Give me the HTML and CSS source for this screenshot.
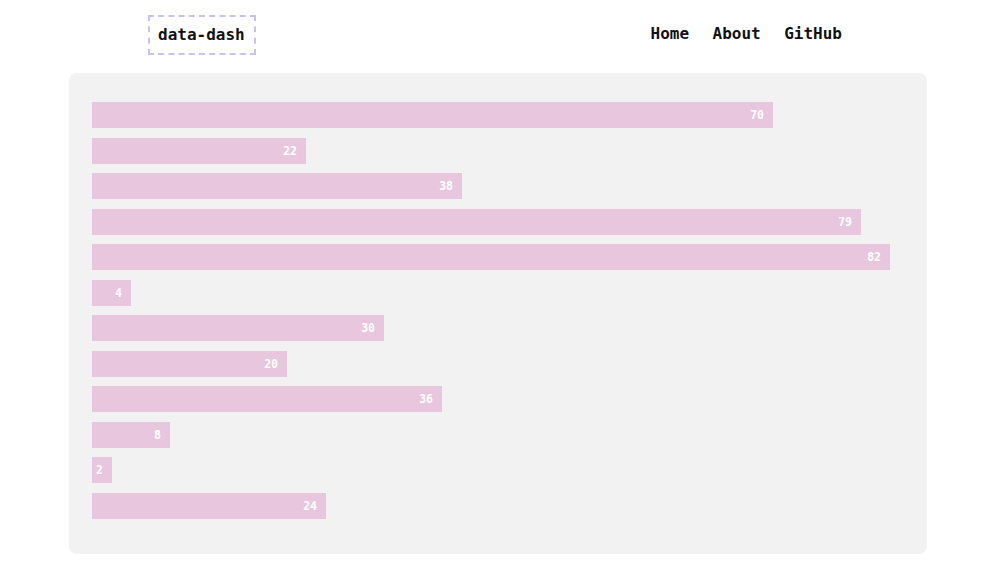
FILE: index.html
```html
<!DOCTYPE html>
<html>
<head>
<meta charset="utf-8">
<link rel="stylesheet" href="styles.css">
</head>
<body>
<header class="top">
  <div class="logo">data-dash</div>
  <nav class="nav">
    <a href="#">Home</a>
    <a href="#">About</a>
    <a href="#">GitHub</a>
  </nav>
</header>
<main class="card">
  <div class="bar" style="width:681px">70</div>
  <div class="bar" style="width:214px">22</div>
  <div class="bar" style="width:370px">38</div>
  <div class="bar" style="width:769px">79</div>
  <div class="bar" style="width:798px">82</div>
  <div class="bar" style="width:39px">4</div>
  <div class="bar" style="width:292px">30</div>
  <div class="bar" style="width:195px">20</div>
  <div class="bar" style="width:350px">36</div>
  <div class="bar" style="width:78px">8</div>
  <div class="bar" style="width:20px">2</div>
  <div class="bar" style="width:234px">24</div>
</main>
</body>
</html>
```

FILE: styles.css
```css
html, body {
  margin: 0;
  padding: 0;
  background: #ffffff;
  font-family: "DejaVu Sans Mono", "Liberation Mono", monospace;
}
.top {
  display: flex;
  justify-content: space-between;
  align-items: center;
  height: 73px;
  padding: 0 158px 0 148px;
  box-sizing: border-box;
}
.logo {
  border: 2px dashed #c9c3ec;
  padding: 9px 9px 9px 8px;
  font-size: 16px;
  font-weight: bold;
  color: #111;
  line-height: 18px;
  margin-top: -3px;
}
.nav {
  display: flex;
  gap: 23.5px;
  margin-top: -6px;
}
.nav a {
  color: #111;
  text-decoration: none;
  font-size: 16px;
  font-weight: bold;
}
.card {
  margin: 0 73px 0 69px;
  background: #f2f2f2;
  border-radius: 8px;
  padding: 29px 23px 35px 23px;
  display: flex;
  flex-direction: column;
  gap: 9.5px;
  height: 481px;
  box-sizing: border-box;
}
.bar {
  height: 26px;
  flex: none;
  background: #e8c6de;
  color: #ffffff;
  font-size: 11.5px;
  font-weight: bold;
  line-height: 27px;
  text-align: right;
  padding-right: 9px;
  box-sizing: border-box;
}
```
